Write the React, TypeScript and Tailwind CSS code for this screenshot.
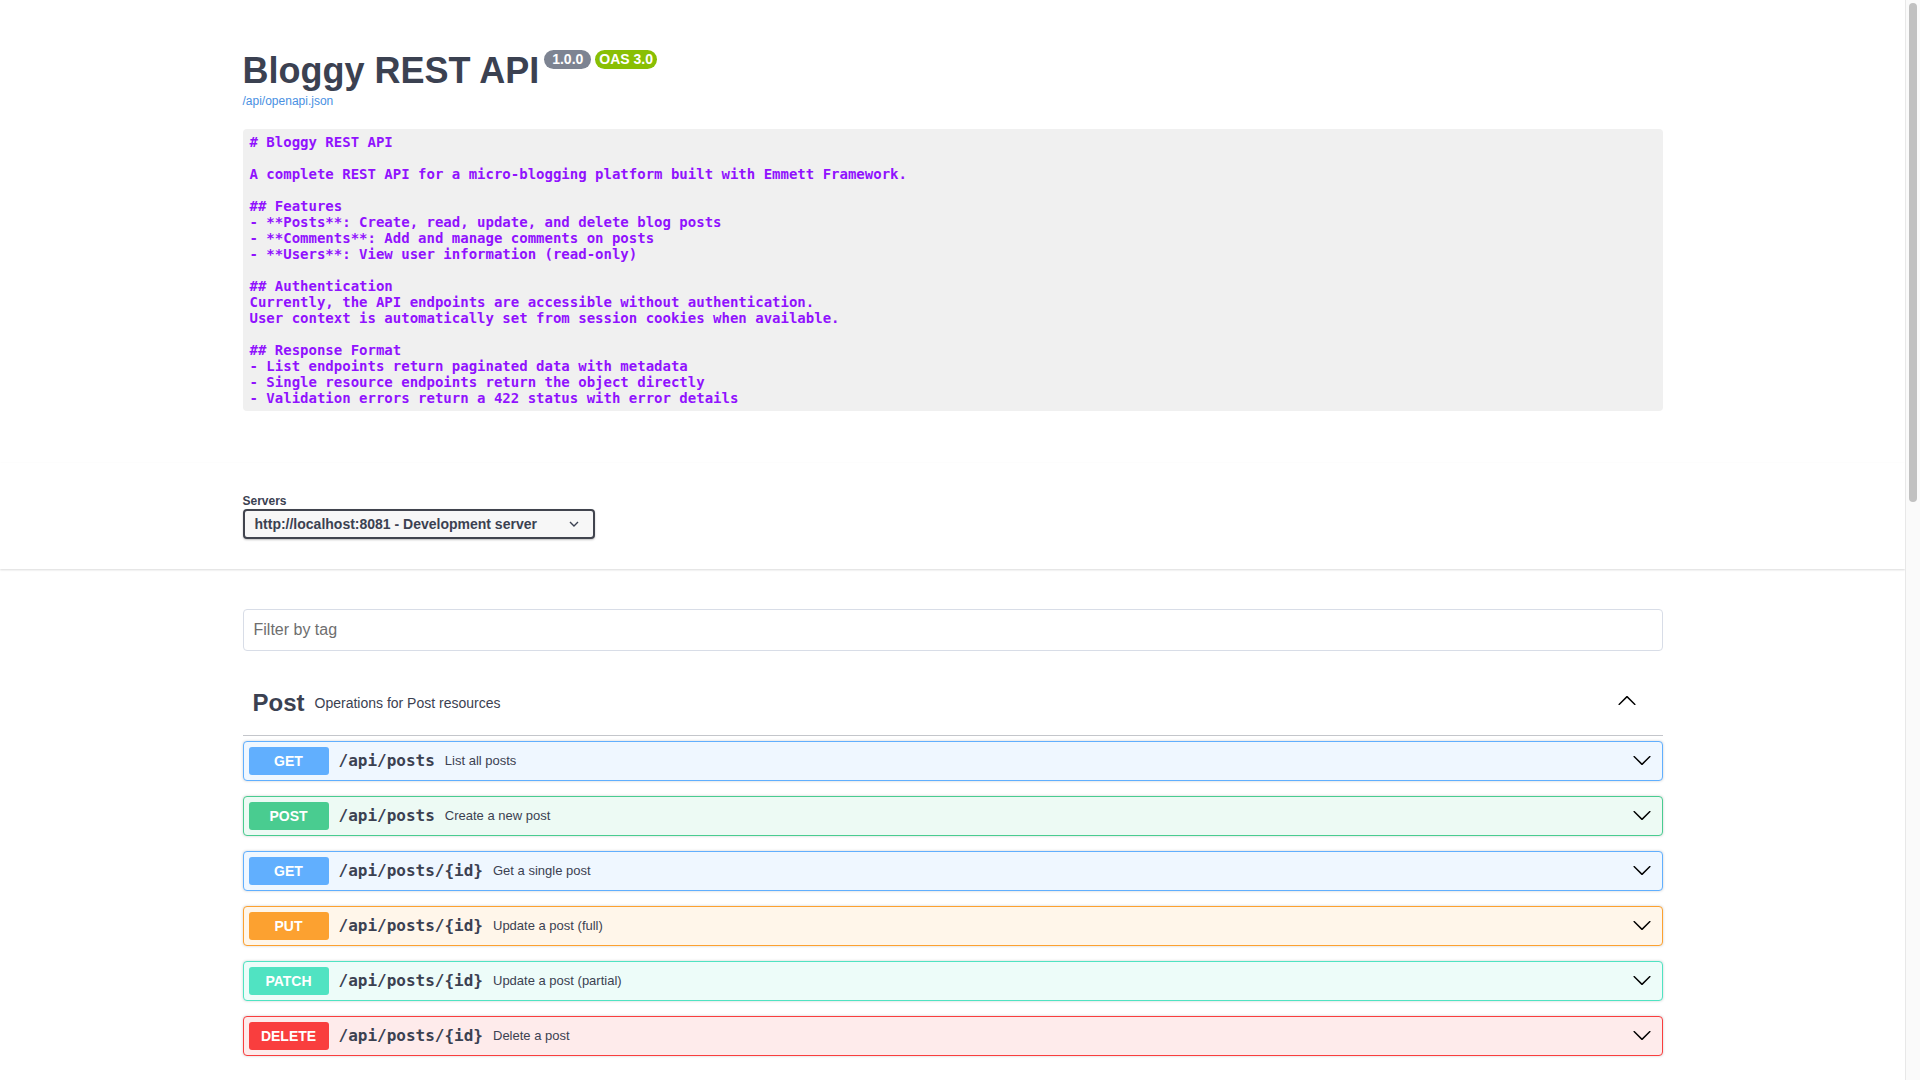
import React from 'react';

type Method = 'GET' | 'POST' | 'PUT' | 'PATCH' | 'DELETE';

const methodStyles: Record<Method, { block: string; badge: string }> = {
    GET: { block: 'border-[#61affe] bg-[#eff7ff]', badge: 'bg-[#61affe]' },
    POST: { block: 'border-[#49cc90] bg-[#edfaf4]', badge: 'bg-[#49cc90]' },
    PUT: { block: 'border-[#fca130] bg-[#fff6ea]', badge: 'bg-[#fca130]' },
    PATCH: { block: 'border-[#50e3c2] bg-[#edfcf9]', badge: 'bg-[#50e3c2]' },
    DELETE: { block: 'border-[#f93e3e] bg-[#feebeb]', badge: 'bg-[#f93e3e]' },
};

interface Operation {
    method: Method;
    path: string;
    summary: string;
}

interface Tag {
    name: string;
    description: string;
    operations: Operation[];
}

const tags: Tag[] = [
    {
        name: 'Post',
        description: 'Operations for Post resources',
        operations: [
            { method: 'GET', path: '/api/posts', summary: 'List all posts' },
            { method: 'POST', path: '/api/posts', summary: 'Create a new post' },
            { method: 'GET', path: '/api/posts/{id}', summary: 'Get a single post' },
            { method: 'PUT', path: '/api/posts/{id}', summary: 'Update a post (full)' },
            { method: 'PATCH', path: '/api/posts/{id}', summary: 'Update a post (partial)' },
            { method: 'DELETE', path: '/api/posts/{id}', summary: 'Delete a post' },
        ],
    },
    {
        name: 'Comment',
        description: 'Operations for Comment resources',
        operations: [
            { method: 'GET', path: '/api/posts/{post_id}/comments', summary: 'List comments for a post' },
            { method: 'POST', path: '/api/posts/{post_id}/comments', summary: 'Add a comment to a post' },
            { method: 'GET', path: '/api/comments/{id}', summary: 'Get a single comment' },
            { method: 'DELETE', path: '/api/comments/{id}', summary: 'Delete a comment' },
        ],
    },
    {
        name: 'User',
        description: 'Operations for User resources',
        operations: [
            { method: 'GET', path: '/api/users', summary: 'List all users' },
            { method: 'GET', path: '/api/users/{id}', summary: 'Get a single user' },
        ],
    },
];

const description = `# Bloggy REST API

A complete REST API for a micro-blogging platform built with Emmett Framework.

## Features
- **Posts**: Create, read, update, and delete blog posts
- **Comments**: Add and manage comments on posts
- **Users**: View user information (read-only)

## Authentication
Currently, the API endpoints are accessible without authentication.
User context is automatically set from session cookies when available.

## Response Format
- List endpoints return paginated data with metadata
- Single resource endpoints return the object directly
- Validation errors return a 422 status with error details`;

const ArrowDown = () => (
    <svg width="20" height="20" viewBox="0 0 20 20" className="fill-current">
        <path d="M17.418 6.109c.272-.268.709-.268.979 0s.271.701 0 .969l-7.908 7.83c-.27.268-.707.268-.979 0l-7.908-7.83c-.27-.268-.27-.701 0-.969.271-.268.709-.268.979 0L10 13.25l7.418-7.141z" />
    </svg>
);

const ArrowUp = () => (
    <svg width="20" height="20" viewBox="0 0 20 20" className="fill-current">
        <path d="M17.418 14.908c.272.268.709.268.979 0s.271-.701 0-.969l-7.908-7.83c-.27-.268-.707-.268-.979 0l-7.908 7.83c-.27.268-.27.701 0 .969.271.268.709.268.979 0L10 7.767l7.418 7.141z" />
    </svg>
);

const OperationRow: React.FC<{ op: Operation }> = ({ op }) => {
    const s = methodStyles[op.method];
    return (
        <div className={`mb-[15px] h-[40px] flex items-center p-[5px] border rounded-[4px] shadow-[0_0_3px_rgba(0,0,0,0.19)] ${s.block}`}>
            <span className={`w-[80px] h-[28px] flex items-center justify-center rounded-[3px] text-white text-[14px] font-bold ${s.badge}`}>
                {op.method}
            </span>
            <span className="px-[10px] font-['DejaVu_Sans_Mono',monospace] text-[16px] font-bold text-[#3b4151]">{op.path}</span>
            <span className="flex-1 text-[13px] text-[#3b4151]">{op.summary}</span>
            <span className="pr-[5px] pb-[2px] text-[#000]">
                <ArrowDown />
            </span>
        </div>
    );
};

const TagSection: React.FC<{ tag: Tag }> = ({ tag }) => (
    <div className="mb-[10px]">
        <div className="h-[65px] flex items-center pl-[10px] pr-[20px] border-b border-[#c4c6cb] mb-[5px] text-[#3b4151]">
            <h3 className="text-[24px] font-bold">{tag.name}</h3>
            <span className="flex-1 px-[10px] text-[14px]">{tag.description}</span>
            <span className="mr-[6px] pb-[6px] text-[#000]">
                <ArrowUp />
            </span>
        </div>
        {tag.operations.map((op, i) => (
            <OperationRow key={i} op={op} />
        ))}
    </div>
);

const App: React.FC = () => {
    return (
        <div className="min-h-screen bg-white font-['Liberation_Sans',Arial,sans-serif] text-[#3b4151]">
            <div className="mr-[15px]">
                {/* info */}
                <div className="max-w-[1460px] mx-auto px-[20px] pt-[50px]">
                    <div className="flex items-start h-[36px]">
                        <h2 className="text-[36px] leading-[42px] font-bold text-[#3b4151]">Bloggy REST API</h2>
                        <span className="ml-[5px] px-[8px] py-[2px] rounded-full bg-[#7d8492] text-white text-[14px] leading-[15px] font-bold">1.0.0</span>
                        <span className="ml-[4px] px-[4px] py-[2px] rounded-full bg-[#89bf04] text-white text-[14px] leading-[15px] font-bold">OAS 3.0</span>
                    </div>
                    <div className="mt-[7px] text-[12px] leading-[16px]">
                        <a className="text-[#4990e2]">/api/openapi.json</a>
                    </div>
                    <pre className="mt-[20px] px-[7px] py-[5px] rounded-[4px] bg-[#f0f0f0] font-['DejaVu_Sans_Mono',monospace] text-[14px] leading-[16px] font-bold text-[#9012fe] whitespace-pre">
                        {description}
                    </pre>
                </div>

                {/* servers */}
                <div className="mt-[52px] py-[30px] bg-white shadow-[0_1px_2px_0_rgba(0,0,0,0.15)]">
                    <div className="max-w-[1460px] mx-auto px-[20px]">
                        <div className="text-[12px] leading-[16px] font-bold">Servers</div>
                        <div className="w-[352px] h-[30px] flex items-center justify-between pl-[10px] pr-[14px] border-2 border-[#41444e] rounded-[4px] bg-[#f7f7f7] shadow-[0_1px_2px_0_rgba(0,0,0,0.25)]">
                            <span className="text-[14px] font-bold text-[#3b4151]">http://localhost:8081 - Development server</span>
                            <svg width="10" height="6" viewBox="0 0 10 6" fill="none" stroke="#3b4151" strokeWidth="1.4">
                                <path d="M1 1l4 4 4-4" />
                            </svg>
                        </div>
                    </div>
                </div>

                {/* operations */}
                <div className="max-w-[1460px] mx-auto px-[20px] pt-[40px] pb-[60px]">
                    <input
                        placeholder="Filter by tag"
                        className="w-full h-[42px] px-[10px] border border-[#d8dde7] rounded-[4px] text-[16px] placeholder:text-[#6e6e6e] outline-none"
                    />
                    <div className="mt-[20px]">
                        {tags.map((t) => (
                            <TagSection key={t.name} tag={t} />
                        ))}
                    </div>

                    <div className="mt-[30px] border border-[#d8dde7] rounded-[4px]">
                        <div className="h-[60px] flex items-center px-[20px] border-b border-[#d8dde7]">
                            <h4 className="flex-1 text-[16px] font-bold">Schemas</h4>
                            <ArrowUp />
                        </div>
                        {['Post', 'PostCreate', 'PostUpdate', 'Comment', 'CommentCreate', 'User', 'PaginatedPosts', 'ValidationError'].map((n) => (
                            <div key={n} className="mx-[20px] my-[10px] h-[44px] flex items-center px-[12px] bg-[#f7f7f7] rounded-[4px] text-[14px] font-bold">
                                {n}
                            </div>
                        ))}
                    </div>
                </div>
            </div>

            {/* window scrollbar */}
            <div className="fixed top-0 right-0 w-[15px] h-screen bg-[#fafafa] border-l border-[#e8e8e8] pt-[3px] pl-[3px]">
                <div className="w-[8px] h-[499px] rounded-full bg-[#c1c1c1]" />
            </div>
        </div>
    );
};

export default App;
